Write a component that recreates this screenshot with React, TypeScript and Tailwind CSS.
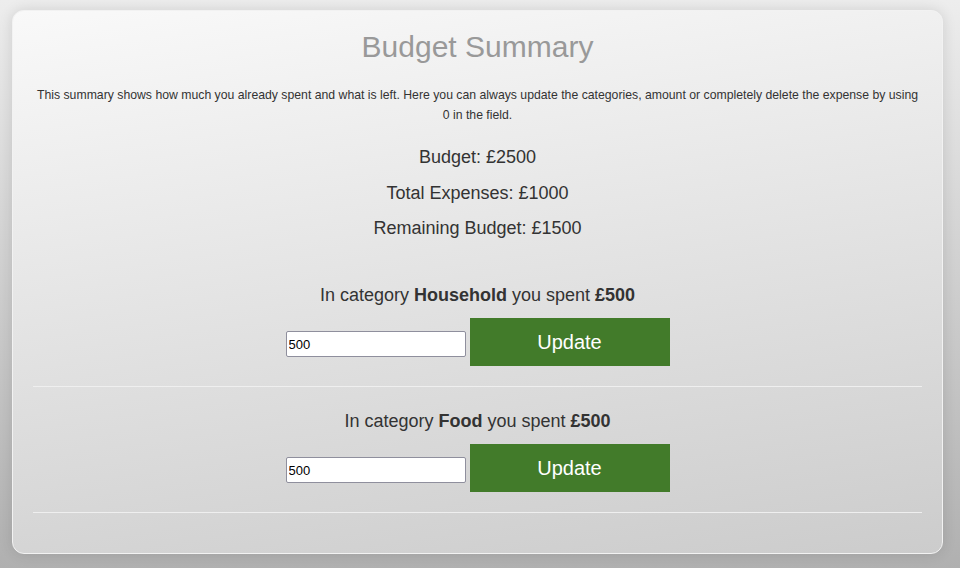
import React from "react"

type Category = { name: string; spent: number }

const CATEGORIES: Category[] = [
    { name: "Household", spent: 500 },
    { name: "Food", spent: 500 },
]

function CategoryRow({ category, first }: { category: Category; first?: boolean }) {
    return (
        <div className={`pb-5 border-b border-[#efefef] ${first ? "pt-[43px]" : "pt-[22px]"}`}>
            <p className="text-[18px] leading-[24px] text-[#333]">
                In category <b>{category.name}</b> you spent <b>£{category.spent}</b>
            </p>
            <div className="mt-[11px] flex justify-center items-start gap-1">
                <input
                    type="text"
                    defaultValue={String(category.spent)}
                    className="mt-[13px] w-[180px] h-[26px] px-[2px] bg-white border border-[#8f8f9d] rounded-[2px] text-[13px] text-black outline-none"
                />
                <button className="w-[200px] h-[48px] bg-[#427b2a] text-white text-[20px]">Update</button>
            </div>
        </div>
    )
}

export default function App() {
    return (
        <div className="h-[568px] overflow-hidden pt-[10px] bg-[linear-gradient(to_bottom,#ededed,#b0b0b0)] font-['Liberation_Sans',Arial,sans-serif]">
            <div className="ml-[12px] w-[931px] h-[544px] rounded-[12px] border border-[#f2f2f2] bg-[linear-gradient(172deg,#f9f9f9,#cccccc)] shadow-[0_0_14px_rgba(0,0,0,0.12)] px-5 text-center">
                <h1 className="pt-[18px] text-[30px] leading-[36px] text-[#999]">Budget Summary</h1>
                <p className="mt-5 text-[12.25px] leading-[20px] text-[#333]">
                    This summary shows how much you already spent and what is left. Here you can always update the categories, amount or completely delete the expense by using 0 in the field.
                </p>
                <div className="mt-5 flex flex-col gap-[11.5px] text-[18px] leading-[24px] text-[#333]">
                    <p>Budget: £2500</p>
                    <p>Total Expenses: £1000</p>
                    <p>Remaining Budget: £1500</p>
                </div>
                {CATEGORIES.map((c, i) => (
                    <CategoryRow key={c.name} category={c} first={i === 0} />
                ))}
            </div>
        </div>
    )
}
